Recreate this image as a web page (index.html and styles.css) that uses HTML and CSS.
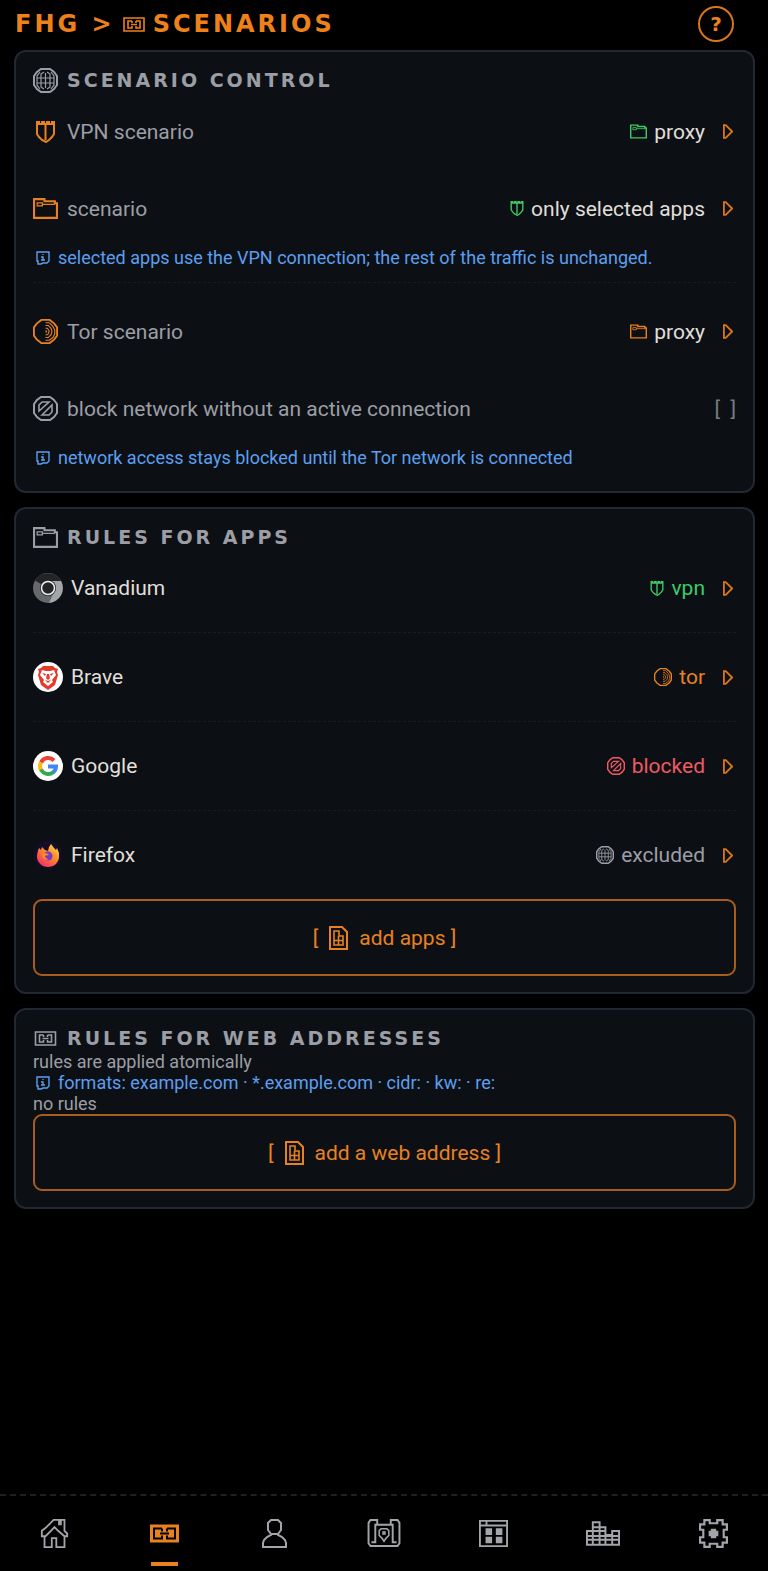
FILE: index.html
```html
<!DOCTYPE html>
<html lang="en">
<head>
  <meta charset="UTF-8">
  <meta name="viewport" content="width=device-width, initial-scale=1.0">
  <title>FHG - scenarios</title>
  <link rel="stylesheet" href="styles.css">
</head>
<body>
  <!-- icon set -->
  <svg class="sprite" aria-hidden="true">
    <symbol id="i-globe" viewBox="0 0 25 25">
      <path d="M8 1h9l4 3 3 4v9l-3 4-4 3H8l-4-3-3-4V8l3-4z"/>
      <path class="thin" d="M12.500 5v15M11 4L8 6v13l3 2M14 4l3 2v13l-3 2M7 4L4 8v9l3 4M18 4l3 4v9l-3 4M4 10h17M4 15h17"/>
    </symbol>
    <symbol id="i-shield" viewBox="0 0 19 22">
      <path d="M1 1h2v2h3V1h2v2h3V1h2v2h3V1h2v12l-2 3-3 3-3 2-4-2-3-3-2-3zM9.500 3v16"/>
    </symbol>
    <symbol id="i-folder" viewBox="0 0 24 20">
      <path d="M1 1h10v2h10v2h2v14H1z"/>
      <path class="thin" d="M4 4.500h5v3H4zM9 6h12"/>
    </symbol>
    <symbol id="i-onion" viewBox="0 0 27 27">
      <path d="M9 1h9l5 4 3 4v9l-3 4-5 4H9l-5-4-3-4V9l3-4z"/>
      <path class="thin" d="M13.500 4h4l4 4 2 4v4l-2 4-4 3h-4M13.500 7h3l3 3 1 3-1 4-3 3h-3M13.500 10h2l2 3-1 3-1 1h-2M13.500 13h1v1h-1"/>
    </symbol>
    <symbol id="i-block" viewBox="0 0 25 25">
      <path d="M8 1h9l4 3 3 4v9l-3 4-4 3H8l-4-3-3-4V8l3-4z"/>
      <path class="mid" d="M6 15V9l3-3h7zM9 19L19 9v7l-3 3z"/>
    </symbol>
    <symbol id="i-info" viewBox="0 0 14 14">
      <path d="M1 1h12v9l-2 2H7l-2 1H2v-3H1zM7 3v1M5 6h2v3M5 9h4"/>
    </symbol>
    <symbol id="i-link" viewBox="0 0 22 15">
      <path class="mid" d="M1 1h20v13H1zM9 4H5v7h4V9M13 4h4v7h-4V9M9 4v2M13 4v2M8 7.500h6"/>
    </symbol>
    <symbol id="i-add" viewBox="0 0 19 24">
      <path d="M1 1h12l5 5v17H1z"/>
      <path class="mid" d="M5 19V5h5v5h4v9zM5 14.500h9M9.500 10v9"/>
    </symbol>
    <symbol id="i-play" viewBox="0 0 11 16">
      <path d="M1 1h2l7 7-7 7H1z"/>
    </symbol>
    <symbol id="i-home" viewBox="0 0 30 32">
      <path d="M1 17v-4l4-3 5-5 4-4h12v12l3 3v3h-3l-7-6-4-4-4 4-6 6H1zM20 1v5h2V1M4 20v11h8V21h5v10h9V20"/>
    </symbol>
    <symbol id="i-scenarios" viewBox="0 0 29 18">
      <path class="fill" d="M0 0h29v18H0z"/>
      <path class="cut" d="M12 4H4v10h8v-3M17 4h8v10h-8v-3M12 4v3M17 4v3M10 9h9"/>
    </symbol>
    <symbol id="i-user" viewBox="0 0 25 29">
      <path d="M9 1h7l3 3v7l-3 4v1l4 2 3 3 1 3v4H1v-4l1-3 3-3 4-2v-1l-3-4V4zM9 15h7"/>
    </symbol>
    <symbol id="i-map" viewBox="0 0 34 30">
      <path d="M3 1h7v5h14V1h7l2 3v21l-2 3H3l-2-3V4zM10 6H8v18H4M24 6h2v18h4"/>
      <path class="mid" d="M14 10h6l2 2v5l-3 3-2 3-2-3-3-3v-5zM16 13.500h2v2h-2z"/>
    </symbol>
    <symbol id="i-window" viewBox="0 0 31 29">
      <path d="M1 1h29v27H1zM1 6h29M8 1v5"/>
      <path class="fill" d="M7 9h7v7H7zM18 9h7v7h-7zM7 18h7v7H7zM18 18h7v7h-7z"/>
    </symbol>
    <symbol id="i-stats" viewBox="0 0 35 25">
      <path d="M1 24V10h6V1h7v5h6v8h7v-4h7v14zM7 10v14M14 6v18M20 14v10M27 14v10M1 15h33M1 19h33M7 10h13M7 6h7"/>
    </symbol>
    <symbol id="i-gear" viewBox="0 0 27 27">
      <path d="M5 1h5v3h7V1h5v4h4v5h-3v7h3v5h-4v4h-5v-3h-7v3H5v-4H1v-5h3v-7H1V5h4z"/>
      <path class="fill" d="M11 9h5v2h2v5h-2v2h-5v-2H9v-5h2z"/>
    </symbol>
  </svg>

  <header class="topbar">
    <h1 class="title">FHG &gt; <svg class="icon title-icon"><use href="#i-link"/></svg> SCENARIOS</h1>
    <button class="help" type="button" aria-label="Help">?</button>
  </header>

  <main class="content">
    <section class="card">
      <h2 class="card-title"><svg class="icon icon-lg"><use href="#i-globe"/></svg>SCENARIO CONTROL</h2>
      <div class="row">
        <svg class="icon icon-lg icon-shield orange"><use href="#i-shield"/></svg>
        <span class="label">VPN scenario</span>
        <button class="value" type="button">
          <svg class="icon icon-sm green"><use href="#i-folder"/></svg>
          <span>proxy</span>
          <svg class="icon arrow"><use href="#i-play"/></svg>
        </button>
      </div>
      <div class="row">
        <svg class="icon icon-lg orange"><use href="#i-folder"/></svg>
        <span class="label">scenario</span>
        <button class="value" type="button">
          <svg class="icon icon-sm icon-narrow green"><use href="#i-shield"/></svg>
          <span>only selected apps</span>
          <svg class="icon arrow"><use href="#i-play"/></svg>
        </button>
      </div>
      <p class="hint"><svg class="icon icon-info"><use href="#i-info"/></svg>selected apps use the VPN connection; the rest of the traffic is unchanged.</p>
      <hr class="divider">
      <div class="row">
        <svg class="icon icon-lg orange"><use href="#i-onion"/></svg>
        <span class="label">Tor scenario</span>
        <button class="value" type="button">
          <svg class="icon icon-sm orange"><use href="#i-folder"/></svg>
          <span>proxy</span>
          <svg class="icon arrow"><use href="#i-play"/></svg>
        </button>
      </div>
      <div class="row">
        <svg class="icon icon-lg"><use href="#i-block"/></svg>
        <label class="label" for="killswitch">block network without an active connection</label>
        <input class="check" type="checkbox" id="killswitch">
      </div>
      <p class="hint hint-last"><svg class="icon icon-info"><use href="#i-info"/></svg>network access stays blocked until the Tor network is connected</p>
    </section>

    <section class="card">
      <h2 class="card-title"><svg class="icon icon-lg"><use href="#i-folder"/></svg>RULES FOR APPS</h2>
      <ul class="apps">
        <li class="app">
          <svg class="logo" viewBox="0 0 30 30">
            <circle cx="15" cy="15" r="15" fill="#66686b"/>
            <path d="M15 15L2 7.500A15 15 0 0 1 28 8z" fill="#222426"/>
            <path d="M15 8h13a15 15 0 0 1-12 22l5-11z" fill="#a3a5a8"/>
            <circle cx="15" cy="15" r="8" fill="#222426"/>
            <circle cx="15" cy="15" r="6.500" fill="#222426" stroke="#f2f2f2" stroke-width="1.500"/>
          </svg>
          <span class="app-name">Vanadium</span>
          <button class="value green" type="button">
            <svg class="icon icon-sm icon-narrow"><use href="#i-shield"/></svg>
            <span>vpn</span>
            <svg class="icon arrow"><use href="#i-play"/></svg>
          </button>
        </li>
        <li class="app">
          <svg class="logo" viewBox="0 0 30 30">
            <circle cx="15" cy="15" r="15" fill="#fff"/>
            <path d="M10 4h10l2 2 3 1-1 3 1 3-3 10-7 5-7-5-3-10 1-3-1-3 3-1z" fill="#e5392b"/>
            <path d="M9 8l4 1h4l4-1 2 5-4 5 1 2-5 4-5-4 1-2-4-5z" fill="#fff"/>
            <path d="M9 11l4 1-1 2zM21 11l-4 1 1 2zM14 12h2l1 4-2 2-2-2zM12 18l3 1 3-1-3 3z" fill="#e5392b"/>
          </svg>
          <span class="app-name">Brave</span>
          <button class="value orange" type="button">
            <svg class="icon icon-sm icon-round"><use href="#i-onion"/></svg>
            <span>tor</span>
            <svg class="icon arrow"><use href="#i-play"/></svg>
          </button>
        </li>
        <li class="app">
          <svg class="logo" viewBox="0 0 30 30">
            <circle cx="15" cy="15" r="15" fill="#fff"/>
            <g fill="none" stroke-width="4">
              <path d="M21 9.500A8 8 0 0 0 8 11.500" stroke="#ea4335"/>
              <path d="M8 11.500a8 8 0 0 0 0 7.500" stroke="#fbbc05"/>
              <path d="M8 18.500a8 8 0 0 0 12.500 2.500" stroke="#34a853"/>
              <path d="M20 21.500a8 8 0 0 0 3-6h-8" stroke="#4285f4"/>
            </g>
          </svg>
          <span class="app-name">Google</span>
          <button class="value red" type="button">
            <svg class="icon icon-sm icon-round"><use href="#i-block"/></svg>
            <span>blocked</span>
            <svg class="icon arrow"><use href="#i-play"/></svg>
          </button>
        </li>
        <li class="app">
          <svg class="logo" viewBox="0 0 30 30">
            <defs>
              <linearGradient id="fox" x1="1" y1="0" x2="0.300" y2="1">
                <stop offset="0" stop-color="#ffe14d"/>
                <stop offset="0.500" stop-color="#ff8a26"/>
                <stop offset="1" stop-color="#f5306a"/>
              </linearGradient>
            </defs>
            <circle cx="15" cy="15" r="14" fill="#140e2b"/>
            <path d="M6 8l2 2 1-3 3 3 3 1 1-4 2-3 3 4 2 2 1-2 2 5v5c-1 5-5 9-11 9S4 22 4 17c0-4 1-6 2-9z" fill="url(#fox)"/>
            <circle cx="15" cy="16" r="4.500" fill="#7839c7"/>
            <path d="M9 14c3-2 5 0 7 0-1 2-3 1-4 2 0 2 2 3 4 3-3 2-7 0-7-5z" fill="#ff8a26"/>
          </svg>
          <span class="app-name">Firefox</span>
          <button class="value grey" type="button">
            <svg class="icon icon-sm icon-round"><use href="#i-globe"/></svg>
            <span>excluded</span>
            <svg class="icon arrow"><use href="#i-play"/></svg>
          </button>
        </li>
      </ul>
      <button class="add" type="button"><span>[</span><svg class="icon icon-add"><use href="#i-add"/></svg><span>add apps ]</span></button>
    </section>

    <section class="card">
      <h2 class="card-title"><svg class="icon icon-lg icon-flat"><use href="#i-link"/></svg>RULES FOR WEB ADDRESSES</h2>
      <p class="note">rules are applied atomically</p>
      <p class="hint"><svg class="icon icon-info"><use href="#i-info"/></svg>formats: example.com · *.example.com · cidr: · kw: · re:</p>
      <p class="note">no rules</p>
      <button class="add" type="button"><span>[</span><svg class="icon icon-add"><use href="#i-add"/></svg><span>add a web address ]</span></button>
    </section>
  </main>

  <nav class="tabs">
    <a class="tab" href="#home" aria-label="Home"><svg class="icon tab-icon"><use href="#i-home"/></svg></a>
    <a class="tab active" href="#scenarios" aria-label="Scenarios"><svg class="icon tab-icon"><use href="#i-scenarios"/></svg></a>
    <a class="tab" href="#profile" aria-label="Profile"><svg class="icon tab-icon"><use href="#i-user"/></svg></a>
    <a class="tab" href="#map" aria-label="Map"><svg class="icon tab-icon tab-wide"><use href="#i-map"/></svg></a>
    <a class="tab" href="#apps" aria-label="Apps"><svg class="icon tab-icon"><use href="#i-window"/></svg></a>
    <a class="tab" href="#stats" aria-label="Statistics"><svg class="icon tab-icon tab-wide"><use href="#i-stats"/></svg></a>
    <a class="tab" href="#settings" aria-label="Settings"><svg class="icon tab-icon"><use href="#i-gear"/></svg></a>
  </nav>
</body>
</html>
```
FILE: styles.css
```css
* {
  box-sizing: border-box;
}
body {
  margin: 0;
  min-height: 100vh;
  display: flex;
  flex-direction: column;
  background: #000;
  color: #9c9ea5;
  font-family: Roboto, "Liberation Sans", sans-serif;
  font-size: 21px;
}
button {
  font: inherit;
  color: inherit;
  background: none;
  border: 0;
  padding: 0;
  cursor: pointer;
}
h1, h2, p, ul {
  margin: 0;
  padding: 0;
}

/* icons */
.sprite {
  display: none;
}
.icon {
  flex: none;
  fill: none;
  stroke: currentColor;
  stroke-width: 2;
}
.thin {
  stroke-width: 1.2;
}
.mid {
  stroke-width: 1.6;
}
.fill {
  fill: currentColor;
  stroke: none;
}
.cut {
  stroke: #000;
}
.icon-lg {
  width: 25px;
  height: 25px;
}
.icon-shield {
  height: 22px;
}
.icon-flat {
  height: 15px;
}
.icon-sm {
  width: 17px;
  height: 15px;
}
.icon-narrow {
  width: 14px;
}
.icon-round {
  width: 18px;
  height: 18px;
}
.icon-info {
  width: 14px;
  height: 14px;
  stroke-width: 1.4;
}
.icon-add {
  width: 19px;
  height: 24px;
}
.orange { color: #e8811f; }
.green { color: #3fcb66; }
.red { color: #ee5a62; }
.grey { color: #9c9ea5; }

/* header */
.topbar {
  display: flex;
  align-items: center;
  justify-content: space-between;
  height: 50px;
  padding: 0 34px 2px 15px;
}
.title {
  display: flex;
  align-items: center;
  gap: 8px;
  color: #ee811a;
  font: bold 24px/30px "DejaVu Sans", sans-serif;
  letter-spacing: 3px;
}
.title-icon {
  width: 22px;
  height: 15px;
}
.help {
  width: 36px;
  height: 36px;
  border: 2px solid #d9751b;
  border-radius: 50%;
  color: #ee811a;
  font: bold 20px/30px "DejaVu Sans", sans-serif;
}

/* cards */
.content {
  display: flex;
  flex-direction: column;
  gap: 14px;
  padding: 0 13px 24px 14px;
}
.card {
  padding: 15px 17px 16px;
  border: 2px solid #222832;
  border-radius: 12px;
  background: #0c1015;
}
.card-title {
  display: flex;
  align-items: center;
  gap: 9px;
  height: 26px;
  font: bold 19px/26px "DejaVu Sans", sans-serif;
  letter-spacing: 3px;
}
.row {
  display: flex;
  align-items: center;
  gap: 9px;
  height: 77px;
}
.label {
  flex: 1;
}
.value {
  display: flex;
  align-items: center;
  gap: 7px;
  color: #e0dfda;
}
.value.green { color: #3fcb66; }
.value.orange { color: #e8811f; }
.value.red { color: #ee5a62; }
.value.grey { color: #9c9ea5; }
.arrow {
  width: 10px;
  height: 15px;
  margin: 0 3px 0 11px;
  color: #d9751b;
}
.check {
  appearance: none;
  margin: 0;
  color: #777a80;
  font: inherit;
  white-space: pre;
  cursor: pointer;
}
.check::before {
  content: "[  ]";
}
.check:checked::before {
  content: "[x]";
}
.hint {
  display: flex;
  align-items: center;
  gap: 8px;
  padding-left: 3px;
  color: #5c9ff0;
  font-size: 18px;
  line-height: 21px;
}
.hint-last {
  padding-bottom: 7px;
}
.note {
  font-size: 18px;
  line-height: 21px;
}
.divider {
  margin: 14px 0 10px;
  border: 0;
  border-top: 1px dashed #171c23;
}

/* app list */
.apps {
  list-style: none;
}
.app {
  display: flex;
  align-items: center;
  gap: 8px;
  padding: 29px 0;
  border-bottom: 1px dashed #171c23;
}
.app:first-child {
  padding-top: 23px;
}
.app:last-child {
  border-bottom: 0;
}
.logo {
  width: 30px;
  height: 30px;
}
.app-name {
  flex: 1;
  color: #e0dfda;
}
.add {
  display: flex;
  align-items: center;
  justify-content: center;
  gap: 11px;
  width: 100%;
  height: 77px;
  border: 2px solid #a85d1d;
  border-radius: 9px;
  color: #e8811f;
}

/* bottom tabs */
.tabs {
  display: flex;
  height: 77px;
  margin-top: auto;
  border-top: 2px dashed #1e2023;
}
.tab {
  flex: 1;
  display: flex;
  align-items: center;
  justify-content: center;
  color: #a3a5ab;
}
.tab-icon {
  width: 29px;
  height: 29px;
}
.tab-wide {
  width: 34px;
}
.active {
  position: relative;
  color: #e8811f;
}
.active::after {
  content: "";
  position: absolute;
  bottom: 5px;
  width: 27px;
  height: 4px;
  background: #e8811f;
}
```
